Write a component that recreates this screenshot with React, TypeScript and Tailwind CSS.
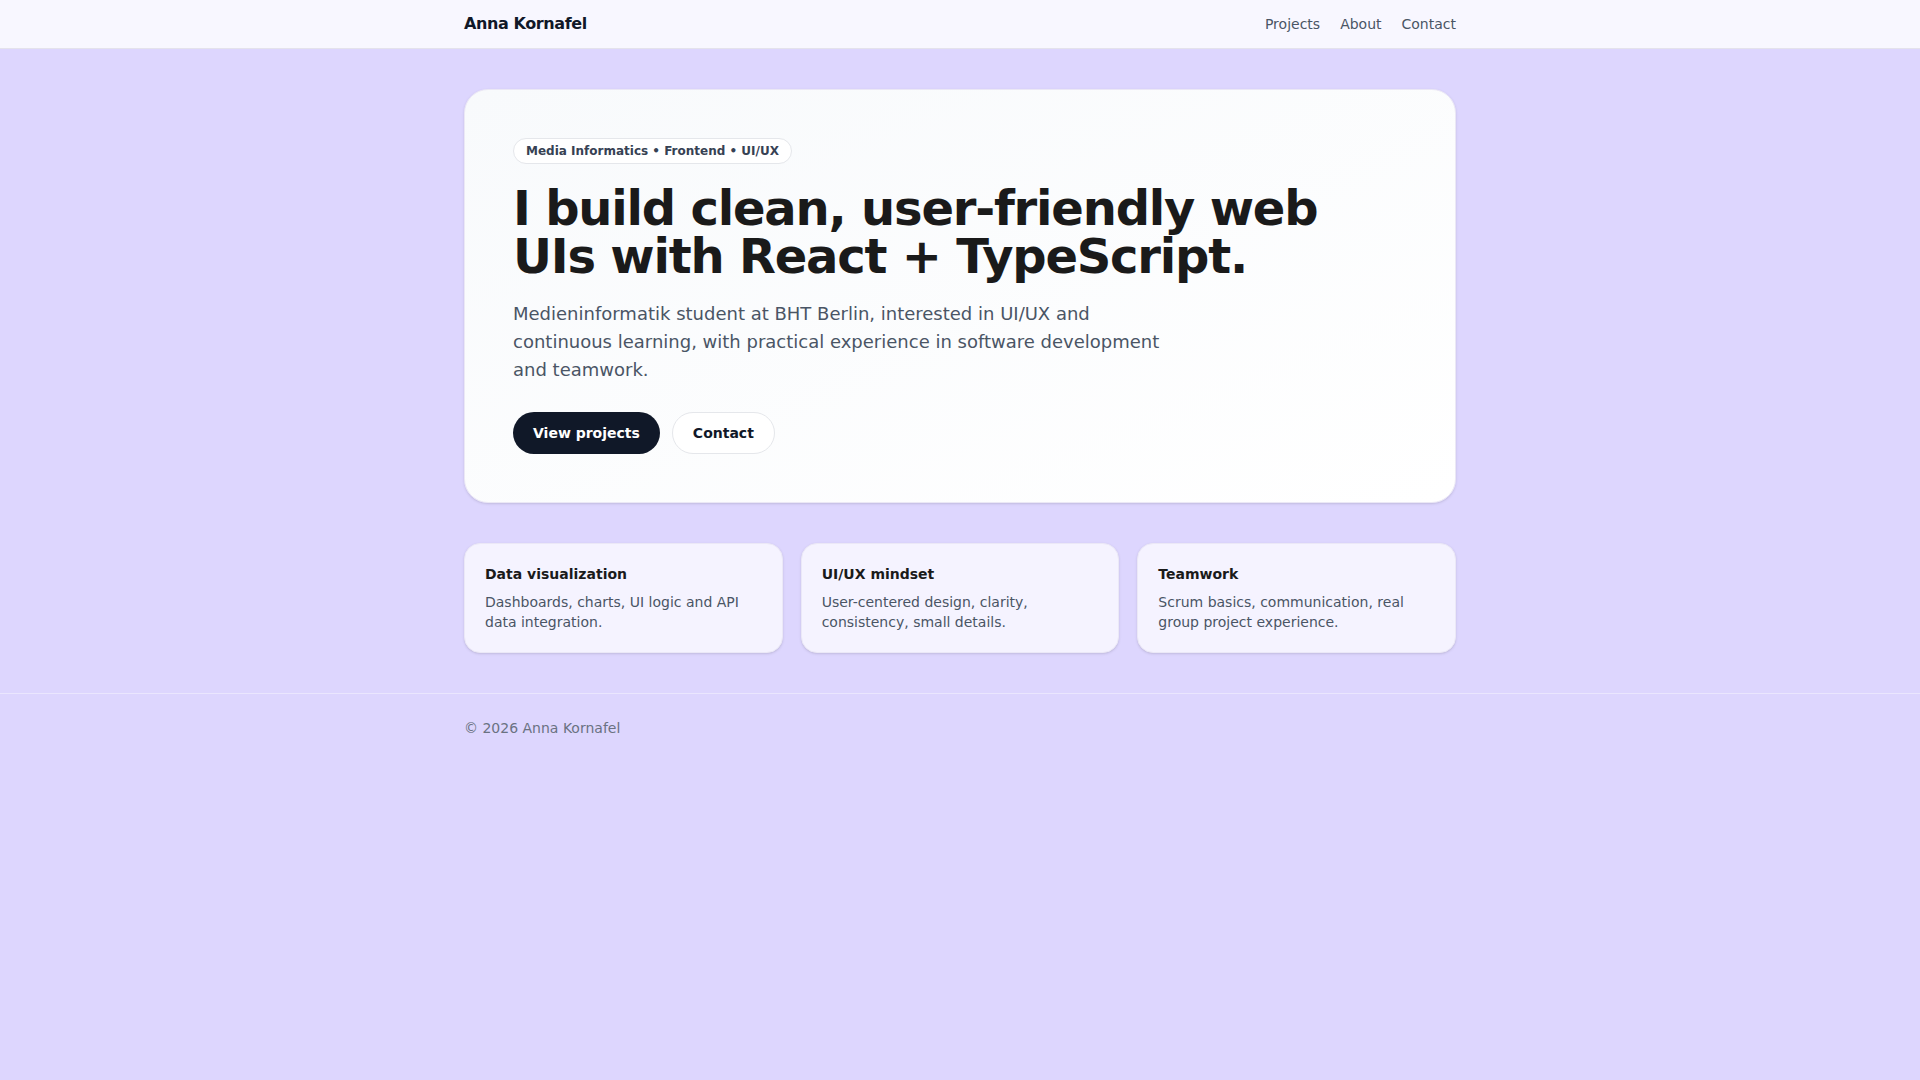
import React from "react";

const features = [
  { title: "Data visualization", text: "Dashboards, charts, UI logic and API data integration." },
  { title: "UI/UX mindset", text: "User-centered design, clarity, consistency, small details." },
  { title: "Teamwork", text: "Scrum basics, communication, real group project experience." },
];

export default function App() {
  return (
    <div
      className="min-h-screen bg-[#ddd6fe] text-[#1a1a1a]"
      style={{ fontFamily: '"DejaVu Sans", sans-serif' }}
    >
      <header className="border-b border-[#e4e2ec] bg-white/80">
        <div className="mx-auto flex h-12 max-w-5xl items-center justify-between px-4">
          <span className="text-base font-bold tracking-tight text-gray-900">Anna Kornafel</span>
          <nav className="flex items-center gap-5 text-sm text-gray-600">
            <a href="#projects">Projects</a>
            <a href="#about">About</a>
            <a href="#contact">Contact</a>
          </nav>
        </div>
      </header>

      <main className="mx-auto max-w-5xl px-4 py-10">
        <section className="rounded-3xl border border-[#ebe8f5] bg-gradient-to-br from-[#f8fafc] to-white p-12 shadow-sm">
          <span className="inline-block rounded-full border border-gray-200 bg-white px-3 py-1 text-xs font-bold text-gray-700">
            Media Informatics • Frontend • UI/UX
          </span>
          <h1 className="mt-5 text-5xl font-bold leading-none tracking-tight text-[#1a1a1a]">
            I build clean, user-friendly web UIs with React + TypeScript.
          </h1>
          <p className="mt-5 max-w-2xl text-lg leading-7 text-gray-600">
            Medieninformatik student at BHT Berlin, interested in UI/UX and continuous learning, with
            practical experience in software development and teamwork.
          </p>
          <div className="mt-7 flex gap-3">
            <a className="inline-flex h-[42px] items-center rounded-full bg-gray-900 px-5 text-sm font-bold text-white" href="#projects">
              View projects
            </a>
            <a className="inline-flex h-[42px] items-center rounded-full border border-gray-200 bg-white px-5 text-sm font-bold text-gray-900" href="#contact">
              Contact
            </a>
          </div>
        </section>

        <section className="mt-10 grid grid-cols-3 gap-[18px]">
          {features.map((f) => (
            <div key={f.title} className="rounded-2xl border border-[#ebe8f7] bg-[#f5f3ff] p-5 shadow-sm">
              <h3 className="text-sm font-bold text-[#1a1a1a]">{f.title}</h3>
              <p className="mt-2 text-sm leading-5 text-gray-600">{f.text}</p>
            </div>
          ))}
        </section>
      </main>

      <footer className="border-t border-white/40">
        <div className="mx-auto max-w-5xl px-4 py-6 text-sm text-gray-500">© 2026 Anna Kornafel</div>
      </footer>
    </div>
  );
}
